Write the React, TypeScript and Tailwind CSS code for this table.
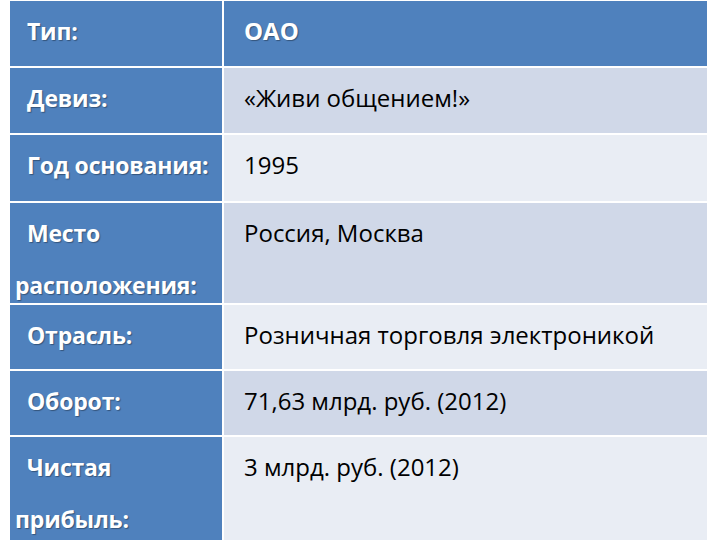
import React from 'react';

const rows = [
  { label: 'Тип:', value: 'ОАО', h: 'h-[65px]', header: true },
  { label: 'Девиз:', value: '«Живи общением!»', h: 'h-[65px]', tint: 'bg-[#d0d8e8]' },
  { label: 'Год основания:', value: '1995', h: 'h-[66px]', tint: 'bg-[#e9edf4]' },
  { label: 'Место расположения:', value: 'Россия, Москва', h: 'h-[100px]', tint: 'bg-[#d0d8e8]' },
  { label: 'Отрасль:', value: 'Розничная торговля электроникой', h: 'h-[64px]', tint: 'bg-[#e9edf4]' },
  { label: 'Оборот:', value: '71,63 млрд. руб. (2012)', h: 'h-[64px]', tint: 'bg-[#d0d8e8]' },
  { label: 'Чистая прибыль:', value: '3 млрд. руб. (2012)', h: 'h-[110px]', tint: 'bg-[#e9edf4]' },
];

export default function App() {
  return (
    <div className="w-[720px] h-[540px] overflow-hidden bg-white pt-[1px] pl-[10px] font-['Open_Sans','Liberation_Sans',sans-serif]">
      <div className="w-[697px] grid grid-cols-[212px_1fr] gap-x-[2px] gap-y-[2px] bg-white">
        {rows.map((row) => (
          <React.Fragment key={row.label}>
            {/* label cell */}
            <div className={`${row.h} bg-[#4f81bd] pl-[5px] pt-[4px] text-[23px] leading-[52px] font-bold text-white indent-[12px] tracking-[-0.2px] [text-shadow:1px_1px_1px_rgba(0,0,0,0.35)]`}>
              {row.label}
            </div>
            {/* value cell */}
            <div
              className={`${row.h} pl-[20px] pt-[4px] text-[24px] leading-[52px] ${
                row.header ? 'bg-[#4f81bd] font-bold text-white [text-shadow:1px_1px_1px_rgba(0,0,0,0.35)]' : `${row.tint} text-black`
              }`}
            >
              {row.value}
            </div>
          </React.Fragment>
        ))}
      </div>
    </div>
  );
}
